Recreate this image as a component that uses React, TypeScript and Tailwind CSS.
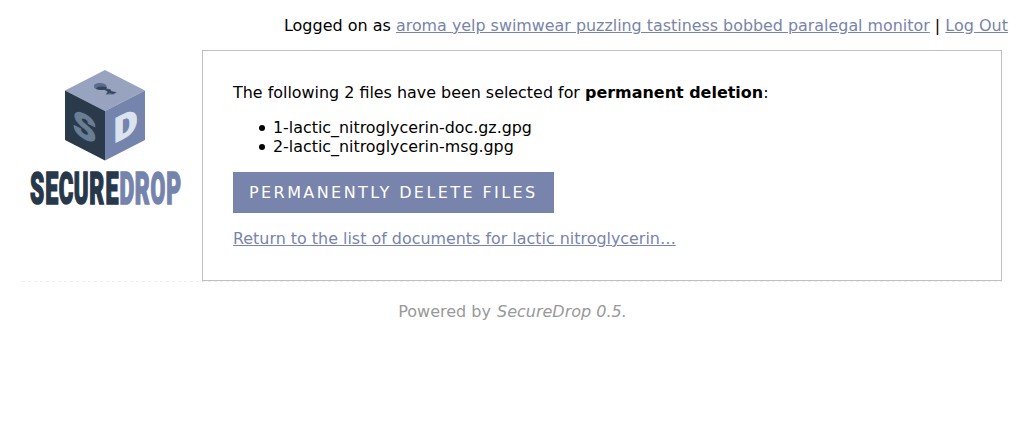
const files = ["1-lactic_nitroglycerin-doc.gz.gpg", "2-lactic_nitroglycerin-msg.gpg"];

const wordmark = [
  { letter: "S", x: 30.8, width: 14.2, color: "#263849" },
  { letter: "E", x: 46, width: 13, color: "#263849" },
  { letter: "C", x: 59.5, width: 14.6, color: "#263849" },
  { letter: "U", x: 74.4, width: 14.8, color: "#263849" },
  { letter: "R", x: 90, width: 15, color: "#263849" },
  { letter: "E", x: 106.1, width: 13, color: "#263849" },
  { letter: "D", x: 120.3, width: 14.8, color: "#7584ac" },
  { letter: "R", x: 135.5, width: 15, color: "#7584ac" },
  { letter: "O", x: 151.2, width: 14.8, color: "#7584ac" },
  { letter: "P", x: 167, width: 14.8, color: "#7584ac" },
];

function Logo() {
  return (
    <svg className="overflow-visible" width="152" height="138" viewBox="30 70 152 138" role="img" aria-label="SecureDrop">
      <path d="M105 70 L145 90.500 L105 111 L65 90.500 Z" fill="#98a3c0" />
      <path d="M65 90.500 L105 111 V160.500 L65 140 Z" fill="#2a3a4b" />
      <path d="M145 90.500 L105 111 V160.500 L145 140 Z" fill="#7584ac" />
      <path
        d="M94 86.300 C94 83.500 97 82.800 100.500 82.900 C105 83.200 107.500 85 106.500 88.300 L110.500 89.300 L111.500 91 L116.700 92.300 L113.500 94.500 L105.500 94.600 L107.500 91.500 L104 89.600 L99 89.800 C96 89.500 94 88.500 94 86.300 Z"
        fill="#5b6c8d"
      />
      <path
        d="M96 88.800 C97 86.500 102 85.900 106.800 87.300 L106 89.300 L110 89.500 L111.500 91.500 L116.700 92.500 L112 94 L110 92.500 L106.500 94.500 L108 91.700 L104.500 89.800 C102 90.200 98.500 90.200 96 88.800 Z"
        fill="#35465c"
      />
      <g fontFamily="Roboto, Liberation Sans, sans-serif" fontWeight="900" strokeLinejoin="miter">
        <text transform="matrix(1 .5 0 1 73.100 132.800)" fontSize="34" textLength="23" lengthAdjust="spacingAndGlyphs" fill="#697d94" stroke="#697d94" strokeWidth="1">S</text>
        <text transform="matrix(1 -.5 0 1 114 143.300)" fontSize="34" textLength="23.500" lengthAdjust="spacingAndGlyphs" fill="#dbe3f0" stroke="#dbe3f0" strokeWidth="1">D</text>
        {wordmark.map(({ letter, x, width, color }) => (
          <text key={x} x={x - 0.7} y="204.200" fontSize="44" textLength={width} lengthAdjust="spacingAndGlyphs" fill={color} stroke={color} strokeWidth="1.600">
            {letter}
          </text>
        ))}
      </g>
    </svg>
  );
}

export default function App() {
  return (
    <div className="min-h-[429px] bg-white font-['DejaVu_Sans',sans-serif] text-base leading-[19px] text-black">
      <header className="flex h-[50px] justify-end pt-4 pr-4">
        <div>
          Logged on as <a href="#" className="text-[15.9px] text-[#7884ab] underline">aroma yelp swimwear puzzling tastiness bobbed paralegal monitor</a>
          {" | "}
          <a href="#" className="text-[#7884ab] underline">Log Out</a>
        </div>
      </header>
      <div className="mr-[22px] ml-[22px] flex">
        <a href="#" className="w-[180px] pt-5 pl-2">
          <Logo />
        </a>
        <main className="h-[231px] w-[800px] border border-[#c0c0c0] px-[30px] pt-8 text-[15.92px]">
          <p>
            The following 2 files have been selected for <strong className="text-[15.96px] leading-[19px] font-bold">permanent deletion</strong>:
          </p>
          <ul className="mt-4">
            {files.map((file) => (
              <li key={file} className="flex h-[19px] items-center pl-[26px]">
                <span className="mt-px mr-2 size-1.5 rounded-full bg-black" />
                <span className="text-[15.88px]">{file}</span>
              </li>
            ))}
          </ul>
          <button className="mt-4 block h-[41px] w-[321px] bg-[#7884ab] pl-4 text-left text-base tracking-[2.42px] whitespace-nowrap text-white uppercase">
            Permanently delete files
          </button>
          <p className="mt-4">
            <a href="#" className="text-[#7884ab] underline">Return to the list of documents for lactic nitroglycerin…</a>
          </p>
        </main>
      </div>
      <footer className="mx-[22px]">
        <div className="h-px bg-[repeating-linear-gradient(90deg,#eeeeee_0px,#eeeeee_3px,transparent_3px,transparent_6px)]" />
        <p className="mt-5 pl-px text-center text-[#999999]">
          Powered by <em className="ml-px">SecureDrop 0.5.</em>
        </p>
      </footer>
    </div>
  );
}
